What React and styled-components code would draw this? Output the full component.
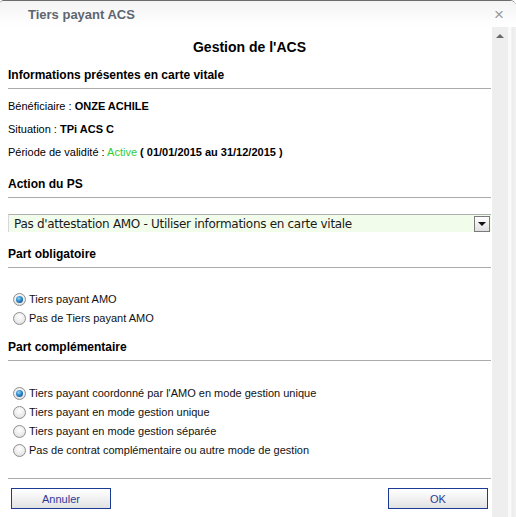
import React from 'react';
import styled, { createGlobalStyle } from 'styled-components';

const GlobalStyle = createGlobalStyle`
  html, body {
    margin: 0;
    padding: 0;
    background: #ffffff;
  }
  body {
    font-family: "Liberation Sans", Arial, sans-serif;
    color: #000;
  }
`

const Window = styled.div`
  width: 516px;
  height: 517px;
  display: flex;
  flex-direction: column;
  box-sizing: border-box;
  border-top: 1px solid #6b6b6b;
  border-top-right-radius: 6px;
  border-top-left-radius: 4px;
  overflow: hidden;
  background: #ffffff;
`

const TitleBar = styled.div`
  height: 26px;
  display: flex;
  align-items: center;
  justify-content: space-between;
  padding: 0 12px 0 28px;
  background: linear-gradient(180deg, #f4f4f4 0%, #ffffff 100%);
`

const Title = styled.span`
  font-size: 13px;
  font-weight: bold;
  color: #5d6670;
`

const Close = styled.span`
  font-size: 17px;
  color: #9a9a9a;
  line-height: 1;
`

const Body = styled.div`
  flex: 1;
  display: flex;
  min-height: 0;
`

const Content = styled.div`
  flex: 1;
  padding: 11px 1px 0 8px;
  display: flex;
  flex-direction: column;
`

const Scrollbar = styled.div`
  width: 16px;
  background: #eeeeee;
  display: flex;
  justify-content: center;
  padding-top: 7px;
  box-sizing: border-box;
`

const UpArrow = styled.div`
  width: 0;
  height: 0;
  border-left: 4px solid transparent;
  border-right: 4px solid transparent;
  border-bottom: 4px solid #6a6a6a;
`

const RightEdge = styled.div`
  width: 8px;
  background: linear-gradient(90deg, #fafafa 0px, #fafafa 3px, #ececec 4px, #f2f2f2 100%);
`

const MainTitle = styled.h1`
  margin: 0 0 11px 0;
  font-size: 14px;
  font-weight: bold;
  text-align: center;
  line-height: 18px;
`

const SectionTitle = styled.h2`
  margin: 0;
  font-size: 12px;
  font-weight: bold;
  line-height: 16px;
  padding-bottom: 5px;
  border-bottom: 1px solid #ababab;
  margin-bottom: ${props => props.gap || 10}px;
`

const InfoLine = styled.div`
  font-size: 11px;
  line-height: 14px;
  margin-bottom: ${props => props.gap || 9}px;
`

const Strong = styled.b`
  font-weight: bold;
`

const Green = styled.span`
  color: #33cc33;
`

const Select = styled.div`
  height: 18px;
  box-sizing: border-box;
  display: flex;
  align-items: center;
  justify-content: space-between;
  background: #f1fdea;
  border-top: 1px solid #b0b0b0;
  border-left: 1px solid #d8d8d8;
  padding-left: 5px;
  margin-bottom: 14px;
  font-size: 12px;
  color: #1a1a1a;
  font-family: "DejaVu Sans", Verdana, sans-serif;
  letter-spacing: -0.3px;
`

const SelectButton = styled.div`
  width: 14px;
  height: 14px;
  margin-right: 1px;
  border: 1px solid #7a7a7a;
  background: linear-gradient(180deg, #ffffff, #e0e0e0);
  display: flex;
  align-items: center;
  justify-content: center;

  &::after {
    content: '';
    border-left: 4px solid transparent;
    border-right: 4px solid transparent;
    border-top: 4px solid #111;
  }
`

const RadioGroup = styled.div`
  display: flex;
  flex-direction: column;
  gap: 5px;
  padding-left: 5px;
  margin-bottom: ${props => props.gap}px;
`

const RadioRow = styled.label`
  display: flex;
  align-items: center;
  gap: 3px;
  font-size: 11px;
  line-height: 14px;
  color: #111;
`

const RadioDot = styled.span`
  width: 13px;
  height: 13px;
  border-radius: 50%;
  box-sizing: border-box;
  border: 1px solid #8f8f8f;
  background: radial-gradient(circle at 50% 35%, #ffffff 0%, #e8e8e8 65%, #cfcfcf 100%);
  display: flex;
  align-items: center;
  justify-content: center;

  &::after {
    content: '';
    display: ${props => (props.checked ? 'block' : 'none')};
    width: 7px;
    height: 7px;
    border-radius: 50%;
    background: radial-gradient(circle at 40% 35%, #8fd4f8 0%, #1f78bd 55%, #0b4a80 100%);
  }
`

const Footer = styled.div`
  border-top: 1px solid #ababab;
  padding: 9px 3px 0 3px;
  display: flex;
  justify-content: space-between;
`

const Button = styled.button`
  width: 100px;
  height: 21px;
  box-sizing: border-box;
  border: 1px solid #1b3a94;
  background: linear-gradient(180deg, #ffffff 0%, #f2f2f2 50%, #e2e2e2 100%);
  color: #2b3a9a;
  font-family: "Liberation Sans", Arial, sans-serif;
  font-size: 11px;
  padding: 0;
`

function Radio({ checked, children }) {
  return (
    <RadioRow>
      <RadioDot checked={checked} />
      {children}
    </RadioRow>
  )
}

export default function App() {
  return (
    <>
      <GlobalStyle />
      <Window>
        <TitleBar>
          <Title>Tiers payant ACS</Title>
          <Close>×</Close>
        </TitleBar>
        <Body>
          <Content>
            <MainTitle>Gestion de l'ACS</MainTitle>
            <SectionTitle gap={10}>Informations présentes en carte vitale</SectionTitle>
            <InfoLine>Bénéficiaire : <Strong>ONZE ACHILE</Strong></InfoLine>
            <InfoLine>Situation : <Strong>TPi ACS C</Strong></InfoLine>
            <InfoLine gap={17}>
              Période de validité : <Green>Active</Green> <Strong>( 01/01/2015 au 31/12/2015 )</Strong>
            </InfoLine>

            <SectionTitle gap={16}>Action du PS</SectionTitle>
            <Select>
              <span>Pas d'attestation AMO - Utiliser informations en carte vitale</span>
              <SelectButton />
            </Select>

            <SectionTitle gap={24}>Part obligatoire</SectionTitle>
            <RadioGroup gap={14}>
              <Radio checked>Tiers payant AMO</Radio>
              <Radio>Pas de Tiers payant AMO</Radio>
            </RadioGroup>

            <SectionTitle gap={25}>Part complémentaire</SectionTitle>
            <RadioGroup gap={21}>
              <Radio checked>Tiers payant coordonné par l'AMO en mode gestion unique</Radio>
              <Radio>Tiers payant en mode gestion unique</Radio>
              <Radio>Tiers payant en mode gestion séparée</Radio>
              <Radio>Pas de contrat complémentaire ou autre mode de gestion</Radio>
            </RadioGroup>

            <Footer>
              <Button>Annuler</Button>
              <Button>OK</Button>
            </Footer>
          </Content>
          <Scrollbar>
            <UpArrow />
          </Scrollbar>
          <RightEdge />
        </Body>
      </Window>
    </>
  )
}
